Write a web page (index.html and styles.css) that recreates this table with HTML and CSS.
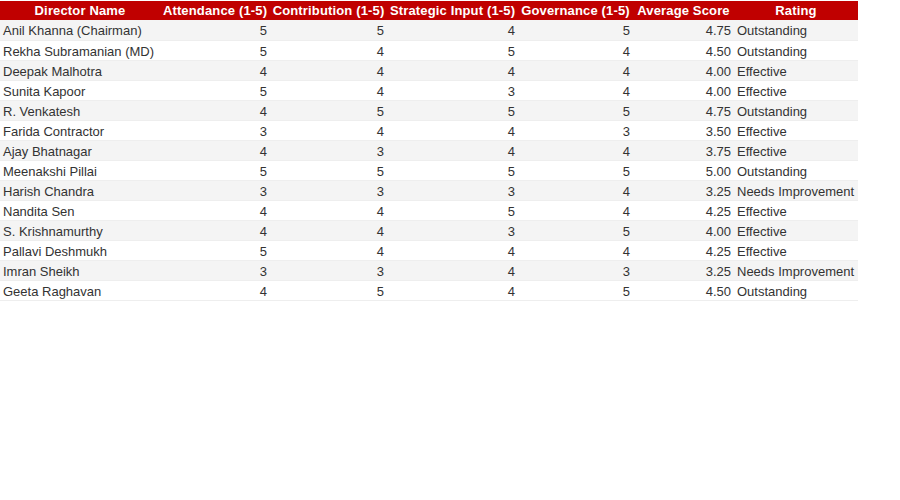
FILE: index.html
```html
<!DOCTYPE html>
<html>
<head>
<meta charset="utf-8">
<link rel="stylesheet" href="styles.css">
</head>
<body>
<table class="board">
<colgroup>
<col class="c-name"><col class="c-att"><col class="c-con"><col class="c-str"><col class="c-gov"><col class="c-avg"><col class="c-rat">
</colgroup>
<thead>
<tr><th>Director Name</th><th>Attendance (1-5)</th><th>Contribution (1-5)</th><th>Strategic Input (1-5)</th><th>Governance (1-5)</th><th>Average Score</th><th>Rating</th></tr>
</thead>
<tbody>
<tr><td>Anil Khanna (Chairman)</td><td class="num">5</td><td class="num">5</td><td class="num">4</td><td class="num">5</td><td class="num">4.75</td><td>Outstanding</td></tr>
<tr><td>Rekha Subramanian (MD)</td><td class="num">5</td><td class="num">4</td><td class="num">5</td><td class="num">4</td><td class="num">4.50</td><td>Outstanding</td></tr>
<tr><td>Deepak Malhotra</td><td class="num">4</td><td class="num">4</td><td class="num">4</td><td class="num">4</td><td class="num">4.00</td><td>Effective</td></tr>
<tr><td>Sunita Kapoor</td><td class="num">5</td><td class="num">4</td><td class="num">3</td><td class="num">4</td><td class="num">4.00</td><td>Effective</td></tr>
<tr><td>R. Venkatesh</td><td class="num">4</td><td class="num">5</td><td class="num">5</td><td class="num">5</td><td class="num">4.75</td><td>Outstanding</td></tr>
<tr><td>Farida Contractor</td><td class="num">3</td><td class="num">4</td><td class="num">4</td><td class="num">3</td><td class="num">3.50</td><td>Effective</td></tr>
<tr><td>Ajay Bhatnagar</td><td class="num">4</td><td class="num">3</td><td class="num">4</td><td class="num">4</td><td class="num">3.75</td><td>Effective</td></tr>
<tr><td>Meenakshi Pillai</td><td class="num">5</td><td class="num">5</td><td class="num">5</td><td class="num">5</td><td class="num">5.00</td><td>Outstanding</td></tr>
<tr><td>Harish Chandra</td><td class="num">3</td><td class="num">3</td><td class="num">3</td><td class="num">4</td><td class="num">3.25</td><td>Needs Improvement</td></tr>
<tr><td>Nandita Sen</td><td class="num">4</td><td class="num">4</td><td class="num">5</td><td class="num">4</td><td class="num">4.25</td><td>Effective</td></tr>
<tr><td>S. Krishnamurthy</td><td class="num">4</td><td class="num">4</td><td class="num">3</td><td class="num">5</td><td class="num">4.00</td><td>Effective</td></tr>
<tr><td>Pallavi Deshmukh</td><td class="num">5</td><td class="num">4</td><td class="num">4</td><td class="num">4</td><td class="num">4.25</td><td>Effective</td></tr>
<tr><td>Imran Sheikh</td><td class="num">3</td><td class="num">3</td><td class="num">4</td><td class="num">3</td><td class="num">3.25</td><td>Needs Improvement</td></tr>
<tr><td>Geeta Raghavan</td><td class="num">4</td><td class="num">5</td><td class="num">4</td><td class="num">5</td><td class="num">4.50</td><td>Outstanding</td></tr>
</tbody>
</table>
</body>
</html>
```
FILE: styles.css
```css
html, body {
  margin: 0;
  padding: 0;
  background: #ffffff;
}
body {
  font-family: "Liberation Sans", Arial, sans-serif;
  font-size: 13px;
  color: #333333;
}
.board {
  border-collapse: collapse;
  table-layout: fixed;
  width: 858px;
  margin-top: 1px;
}
.c-name { width: 160px; }
.c-att { width: 110px; }
.c-con { width: 117px; }
.c-str { width: 131px; }
.c-gov { width: 115px; }
.c-avg { width: 101px; }
.c-rat { width: 124px; }
.board th {
  background: #c00000;
  color: #ffffff;
  font-weight: bold;
  height: 19px;
  box-sizing: border-box;
  padding: 2px 0 2px 0;
  line-height: 15px;
  text-align: center;
  white-space: nowrap;
  letter-spacing: 0.15px;
}
.board td {
  height: 20px;
  box-sizing: border-box;
  padding: 3px 3px 1px 3px;
  line-height: 15px;
  border-bottom: 1px solid #eeeeee;
  white-space: nowrap;
}
.board tbody tr:nth-child(odd) {
  background: #f4f4f4;
}
.board td.num {
  text-align: right;
}
```
